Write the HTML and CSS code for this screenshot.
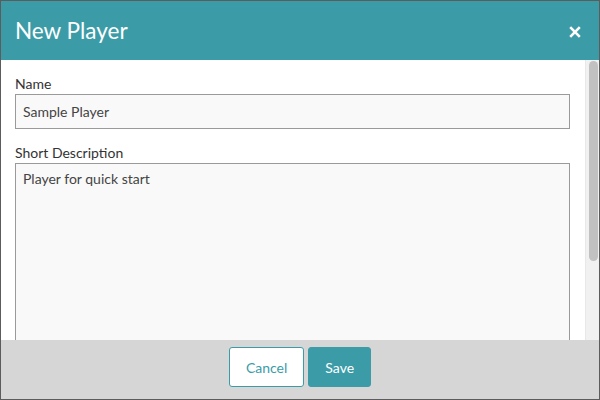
FILE: index.html
```html
<!DOCTYPE html>
<html>
<head>
<meta charset="utf-8">
<link rel="stylesheet" href="styles.css">
</head>
<body>
<div class="modal">
  <div class="modal-header">
    <h1 class="modal-title">New Player</h1>
    <button class="close-btn" aria-label="Close">
      <svg width="12" height="12" viewBox="0 0 12 12"><path d="M1.2 1.2 L10.8 10.8 M10.8 1.2 L1.2 10.8" stroke="#fff" stroke-width="2.6" stroke-linecap="butt"/></svg>
    </button>
  </div>
  <div class="modal-main">
    <div class="modal-body">
      <label class="field-label">Name</label>
      <input class="field-input" type="text" value="Sample Player">
      <label class="field-label">Short Description</label>
      <textarea class="field-textarea">Player for quick start</textarea>
    </div>
    <div class="scrollbar"><div class="scrollbar-thumb"></div></div>
  </div>
  <div class="modal-footer">
    <button class="btn btn-secondary">Cancel</button>
    <button class="btn btn-primary">Save</button>
  </div>
</div>
</body>
</html>
```
FILE: styles.css
```css
* { box-sizing: border-box; }
html, body { margin: 0; padding: 0; }
body {
  width: 600px;
  height: 400px;
  font-family: Lato, "Liberation Sans", sans-serif;
  background: #ffffff;
}
.modal {
  width: 600px;
  height: 400px;
  border: 1px solid #5c5c5c;
  display: flex;
  flex-direction: column;
  background: #ffffff;
}
.modal-header {
  height: 59px;
  flex: none;
  background: #3b9ca8;
  display: flex;
  align-items: center;
  justify-content: space-between;
  padding: 0 17px 0 14px;
}
.modal-title {
  margin: 0;
  font-size: 22.5px;
  font-weight: 400;
  color: #ffffff;
  line-height: 1;
  padding-top: 2px;
}
.close-btn {
  background: none;
  border: 0;
  padding: 0;
  width: 14px;
  height: 14px;
  display: flex;
  align-items: center;
  justify-content: center;
  padding-top: 3px;
}
.modal-main {
  flex: 1;
  min-height: 0;
  display: flex;
}
.modal-body {
  flex: 1;
  min-width: 0;
  overflow: hidden;
  padding: 15px 15px 14px 14px;
}
.scrollbar {
  width: 14px;
  flex: none;
  background: #f1f1f1;
  border-left: 1px solid #e8e8e8;
  padding: 1px 1px 0 3px;
}
.scrollbar-thumb {
  height: 200px;
  background: #c1c1c1;
  border-radius: 5px;
}
.field-label {
  display: block;
  font-size: 14px;
  line-height: 18px;
  color: #333333;
  margin-bottom: 1px;
}
.field-input, .field-textarea {
  display: block;
  width: 100%;
  font-family: Lato, "Liberation Sans", sans-serif;
  font-size: 14px;
  color: #444444;
  background: #f9f9f9;
  border: 1px solid #9a9a9a;
  border-radius: 0;
  outline: none;
  margin: 0;
}
.field-input {
  height: 35px;
  padding: 0 7px;
  margin-bottom: 15px;
}
.field-textarea {
  height: 260px;
  padding: 5px 7px;
  line-height: 20px;
  resize: none;
}
.modal-footer {
  height: 59px;
  flex: none;
  background: #d6d6d6;
  display: flex;
  justify-content: center;
  align-items: flex-start;
  gap: 4px;
  padding-top: 7px;
}
.btn {
  height: 40px;
  font-family: Lato, "Liberation Sans", sans-serif;
  font-size: 14px;
  border-radius: 3px;
  padding: 0 16px;
  cursor: pointer;
}
.btn-secondary {
  background: #ffffff;
  color: #3b9ca8;
  border: 1px solid #3b9ca8;
}
.btn-primary {
  background: #3b9ca8;
  color: #ffffff;
  border: 1px solid #3b9ca8;
}
```
